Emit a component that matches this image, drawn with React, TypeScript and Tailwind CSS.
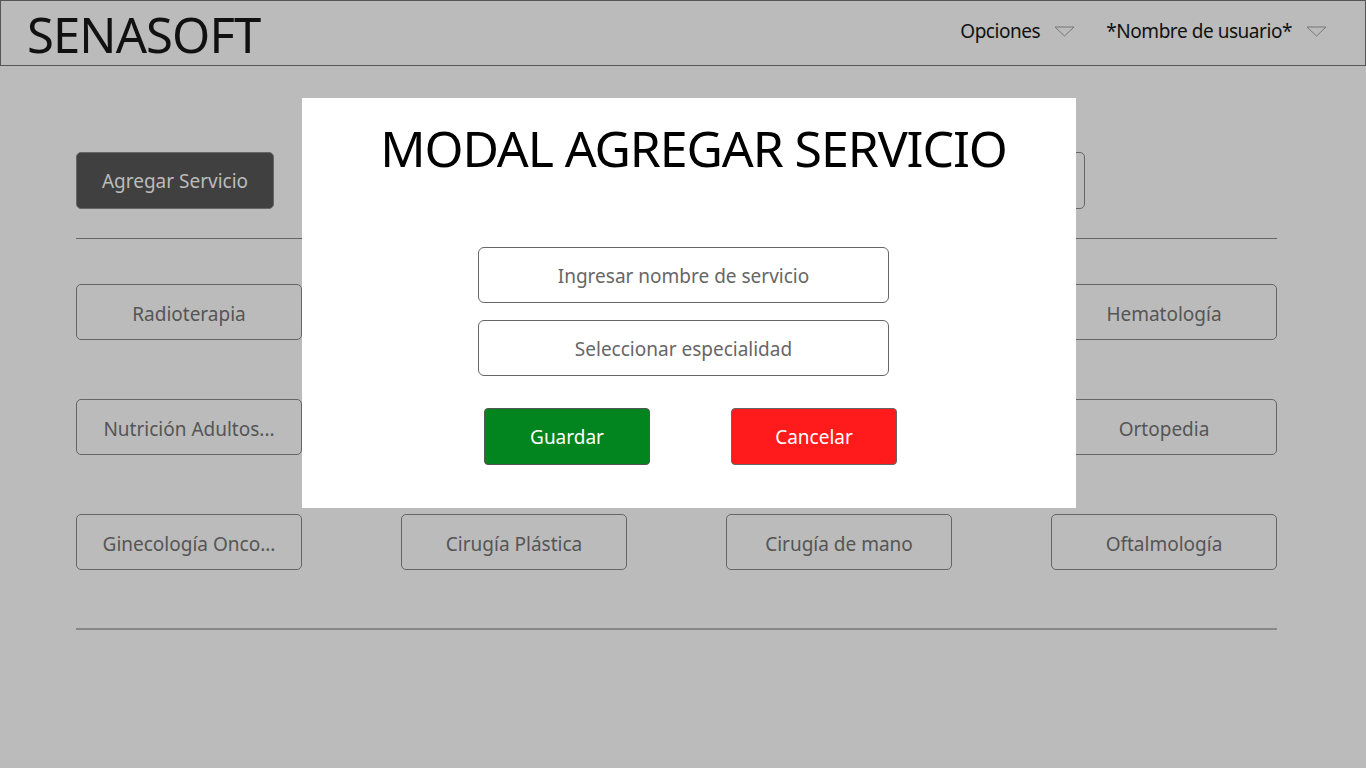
import React from "react";

// cards covered by the modal are left without a label
const services = [
  "Radioterapia",
  "",
  "",
  "Hematología",
  "Nutrición Adultos...",
  "",
  "",
  "Ortopedia",
  "Ginecología Onco...",
  "Cirugía Plástica",
  "Cirugía de mano",
  "Oftalmología",
];

function Caret() {
  return (
    <svg width="21" height="11" viewBox="0 0 21 11" className="ml-[14px]">
      <path d="M1 1 L20 1 L10.5 10 Z" fill="none" stroke="#777" strokeWidth="1" />
    </svg>
  );
}

export default function App() {
  return (
    <div
      className="relative w-[1366px] h-[768px] bg-[#bbbbbb] overflow-hidden"
      style={{ fontFamily: '"Noto Sans", "Open Sans", sans-serif' }}
    >
      {/* header */}
      <header className="h-[66px] border border-[#555] flex items-center justify-between pl-[26px] pr-[38px]">
        <h1 className="text-[49px] leading-none text-[#111] tracking-[-0.9px] pt-[2px]">SENASOFT</h1>
        <nav className="flex items-center text-[19px] text-[#111] tracking-[-0.45px] pb-[3px]">
          <div className="flex items-center">
            <span>Opciones</span>
            <Caret />
          </div>
          <div className="flex items-center ml-[31px]">
            <span>*Nombre de usuario*</span>
            <Caret />
          </div>
        </nav>
      </header>

      {/* page */}
      <main className="mx-[76px] w-[1201px] pt-[86px]">
        <div className="flex items-center justify-between pr-[192px]">
          <button className="w-[198px] h-[57px] rounded-[5px] bg-[#404040] border border-[#666] text-[#bcbcbc] text-[19px] pt-[2px]">
            Agregar Servicio
          </button>
          <div className="w-[560px] h-[57px] rounded-[5px] border border-[#666]" />
        </div>
        <hr className="mt-[29px] border-t border-[#666]" />

        <div className="grid grid-cols-4 gap-x-[99px] gap-y-[59px] mt-[45px]">
          {services.map((s, i) => (
            <div
              key={i}
              className="h-[56px] rounded-[5px] border border-[#666] flex items-center justify-center text-[19px] text-[#555] pt-[4px]"
            >
              {s}
            </div>
          ))}
        </div>
        <hr className="mt-[58px] border-t-2 border-[#888]" />
      </main>

      {/* modal */}
      <div className="absolute left-[302px] top-[98px] w-[774px] h-[410px] bg-white flex flex-col">
        <h2 className="mt-[20px] text-center pl-[9px] text-[50px] leading-[60px] text-black tracking-[-1.1px]">
          MODAL AGREGAR SERVICIO
        </h2>
        <div className="ml-[176px] mt-[69px] flex flex-col gap-[17px]">
          <div className="w-[411px] h-[56px] rounded-[6px] border border-[#666] flex items-center justify-center text-[19px] text-[#666] pt-[3px]">
            Ingresar nombre de servicio
          </div>
          <div className="w-[411px] h-[56px] rounded-[6px] border border-[#666] flex items-center justify-center text-[19px] text-[#666] pt-[3px]">
            Seleccionar especialidad
          </div>
        </div>
        <div className="ml-[182px] mt-[32px] w-[413px] flex gap-[81px]">
          <button className="w-[166px] h-[57px] rounded-[4px] bg-[#02841e] border border-[#555] text-white text-[19px] pt-[2px]">
            Guardar
          </button>
          <button className="w-[166px] h-[57px] rounded-[4px] bg-[#ff1b1b] border border-[#666] text-white text-[19px] pt-[2px]">
            Cancelar
          </button>
        </div>
      </div>
    </div>
  );
}
